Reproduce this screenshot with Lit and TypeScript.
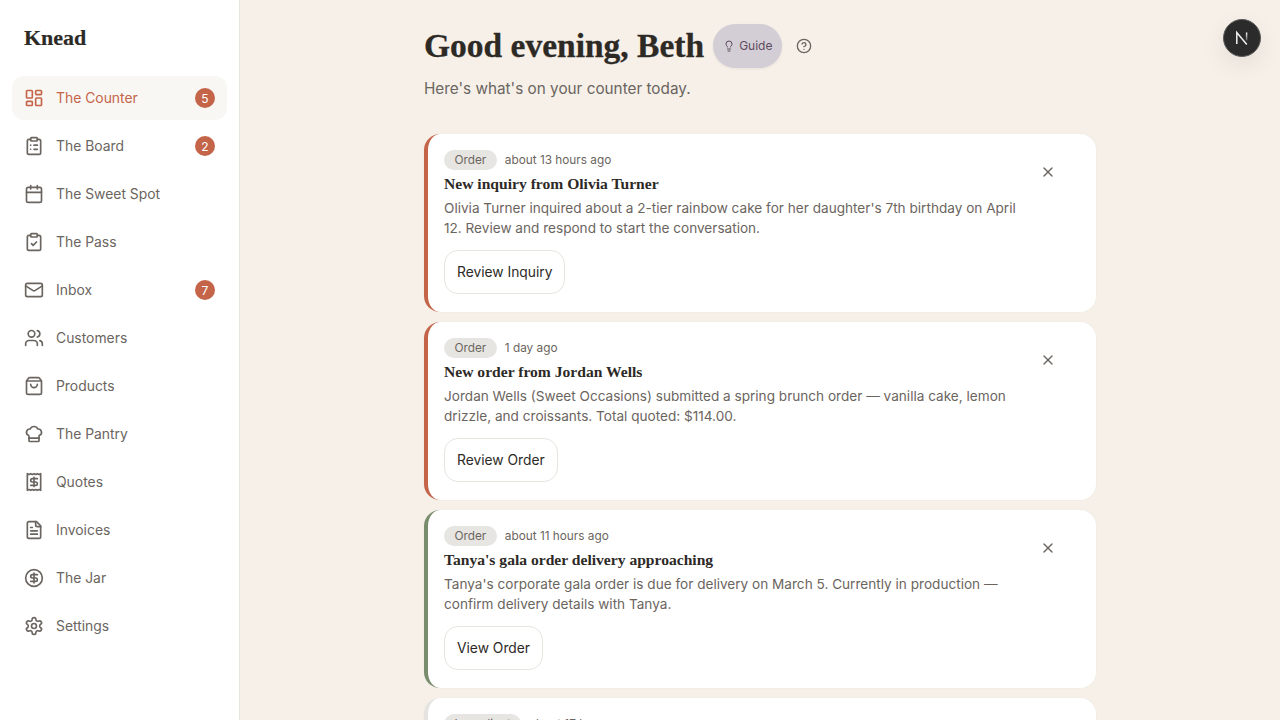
import { LitElement, html, css, svg } from 'lit';
import { customElement, state } from 'lit/decorators.js';
import { classMap } from 'lit/directives/class-map.js';

const ICONS: Record<string, unknown> = {
  dashboard: svg`<rect x="3" y="3" width="7" height="9" rx="1"/><rect x="14" y="3" width="7" height="5" rx="1"/><rect x="14" y="12" width="7" height="9" rx="1"/><rect x="3" y="16" width="7" height="5" rx="1"/>`,
  board: svg`<rect x="8" y="2" width="8" height="4" rx="1"/><path d="M16 4h2a2 2 0 0 1 2 2v14a2 2 0 0 1-2 2H6a2 2 0 0 1-2-2V6a2 2 0 0 1 2-2h2"/><path d="M12 11h4"/><path d="M12 16h4"/><path d="M8 11h.01"/><path d="M8 16h.01"/>`,
  calendar: svg`<path d="M8 2v4"/><path d="M16 2v4"/><rect x="3" y="4" width="18" height="18" rx="2"/><path d="M3 10h18"/>`,
  pass: svg`<rect x="8" y="2" width="8" height="4" rx="1"/><path d="M16 4h2a2 2 0 0 1 2 2v14a2 2 0 0 1-2 2H6a2 2 0 0 1-2-2V6a2 2 0 0 1 2-2h2"/><path d="m9 14 2 2 4-4"/>`,
  mail: svg`<rect x="2" y="4" width="20" height="16" rx="2"/><path d="m22 7-8.97 5.7a1.94 1.94 0 0 1-2.06 0L2 7"/>`,
  users: svg`<path d="M16 21v-2a4 4 0 0 0-4-4H6a4 4 0 0 0-4 4v2"/><circle cx="9" cy="7" r="4"/><path d="M22 21v-2a4 4 0 0 0-3-3.87"/><path d="M16 3.13a4 4 0 0 1 0 7.75"/>`,
  bag: svg`<path d="M16 10a4 4 0 0 1-8 0"/><path d="M3.103 6.034h17.794"/><path d="M3.4 5.467a2 2 0 0 0-.4 1.2V20a2 2 0 0 0 2 2h14a2 2 0 0 0 2-2V6.667a2 2 0 0 0-.4-1.2l-2-2.667A2 2 0 0 0 17 2H7a2 2 0 0 0-1.6.8z"/>`,
  chef: svg`<path d="M17 21a1 1 0 0 0 1-1v-5.35c0-.457.316-.844.727-1.041a4 4 0 0 0-2.134-7.589 5 5 0 0 0-9.186 0 4 4 0 0 0-2.134 7.588c.411.198.727.585.727 1.041V20a1 1 0 0 0 1 1Z"/><path d="M6 17h12"/>`,
  receipt: svg`<path d="M4 2v20l2-1 2 1 2-1 2 1 2-1 2 1 2-1 2 1V2l-2 1-2-1-2 1-2-1-2 1-2-1-2 1Z"/><path d="M16 8h-6a2 2 0 1 0 0 4h4a2 2 0 1 1 0 4H8"/><path d="M12 17.5v-11"/>`,
  file: svg`<path d="M15 2H6a2 2 0 0 0-2 2v16a2 2 0 0 0 2 2h12a2 2 0 0 0 2-2V7Z"/><path d="M14 2v4a2 2 0 0 0 2 2h4"/><path d="M10 9H8"/><path d="M16 13H8"/><path d="M16 17H8"/>`,
  dollar: svg`<circle cx="12" cy="12" r="10"/><path d="M16 8h-6a2 2 0 1 0 0 4h4a2 2 0 1 1 0 4H8"/><path d="M12 18V6"/>`,
  settings: svg`<path d="M12.22 2h-.44a2 2 0 0 0-2 2v.18a2 2 0 0 1-1 1.73l-.43.25a2 2 0 0 1-2 0l-.15-.08a2 2 0 0 0-2.73.73l-.22.38a2 2 0 0 0 .73 2.73l.15.1a2 2 0 0 1 1 1.72v.51a2 2 0 0 1-1 1.74l-.15.09a2 2 0 0 0-.73 2.73l.22.38a2 2 0 0 0 2.73.73l.15-.08a2 2 0 0 1 2 0l.43.25a2 2 0 0 1 1 1.73V20a2 2 0 0 0 2 2h.44a2 2 0 0 0 2-2v-.18a2 2 0 0 1 1-1.73l.43-.25a2 2 0 0 1 2 0l.15.08a2 2 0 0 0 2.73-.73l.22-.39a2 2 0 0 0-.73-2.73l-.15-.08a2 2 0 0 1-1-1.74v-.5a2 2 0 0 1 1-1.74l.15-.09a2 2 0 0 0 .73-2.73l-.22-.38a2 2 0 0 0-2.73-.73l-.15.08a2 2 0 0 1-2 0l-.43-.25a2 2 0 0 1-1-1.73V4a2 2 0 0 0-2-2z"/><circle cx="12" cy="12" r="3"/>`,
  bulb: svg`<path d="M15 14c.2-1 .7-1.7 1.5-2.5 1-.9 1.5-2.2 1.5-3.5A6 6 0 0 0 6 8c0 1 .2 2.2 1.5 3.5.7.7 1.3 1.5 1.5 2.5"/><path d="M9 18h6"/><path d="M10 22h4"/>`,
  help: svg`<circle cx="12" cy="12" r="10"/><path d="M9.09 9a3 3 0 0 1 5.83 1c0 2-3 3-3 3"/><path d="M12 17h.01"/>`,
  close: svg`<path d="M18 6 6 18"/><path d="m6 6 12 12"/>`,
};

const icon = (name: string, size: number) => html`
  <svg width=${size} height=${size} viewBox="0 0 24 24" fill="none" stroke="currentColor" stroke-width="2" stroke-linecap="round" stroke-linejoin="round">${ICONS[name]}</svg>
`;

const NAV = [
  { label: 'The Counter', icon: 'dashboard', badge: 5 },
  { label: 'The Board', icon: 'board', badge: 2 },
  { label: 'The Sweet Spot', icon: 'calendar' },
  { label: 'The Pass', icon: 'pass' },
  { label: 'Inbox', icon: 'mail', badge: 7 },
  { label: 'Customers', icon: 'users' },
  { label: 'Products', icon: 'bag' },
  { label: 'The Pantry', icon: 'chef' },
  { label: 'Quotes', icon: 'receipt' },
  { label: 'Invoices', icon: 'file' },
  { label: 'The Jar', icon: 'dollar' },
  { label: 'Settings', icon: 'settings' },
];

const CARDS = [
  {
    tag: 'Order', time: 'about 13 hours ago', tone: 'urgent', action: 'Review Inquiry',
    title: 'New inquiry from Olivia Turner',
    body: "Olivia Turner inquired about a 2-tier rainbow cake for her daughter's 7th birthday on April 12. Review and respond to start the conversation.",
  },
  {
    tag: 'Order', time: '1 day ago', tone: 'urgent', action: 'Review Order',
    title: 'New order from Jordan Wells',
    body: 'Jordan Wells (Sweet Occasions) submitted a spring brunch order — vanilla cake, lemon drizzle, and croissants. Total quoted: $114.00.',
  },
  {
    tag: 'Order', time: 'about 11 hours ago', tone: 'calm', action: 'View Order',
    title: "Tanya's gala order delivery approaching",
    body: "Tanya's corporate gala order is due for delivery on March 5. Currently in production — confirm delivery details with Tanya.",
  },
  {
    tag: 'Ingredient', time: 'about 17 hours ago', tone: 'muted', action: 'View Pantry',
    title: 'Running low on vanilla bean paste',
    body: 'Vanilla bean paste is below its reorder level. Add it to your next supply run.',
  },
];

@customElement('app-root')
export class AppRoot extends LitElement {
  @state() private active = 'The Counter';

  static styles = css`
    :host {
      display: flex;
      width: 100%;
      height: 720px;
      overflow: hidden;
      background: #f6f0e9;
      font-family: 'Inter', sans-serif;
      color: #2d2a26;
    }

    .sidebar {
      flex: 0 0 240px;
      box-sizing: border-box;
      background: #fff;
      border-right: 1px solid #e8e4df;
      padding: 0 12px;
    }

    .logo {
      height: 76px;
      display: flex;
      align-items: center;
      padding-left: 12px;
      font-family: 'Liberation Serif', serif;
      font-size: 22px;
      font-weight: 700;
      -webkit-text-stroke: 0.2px #2d2a26;
    }

    .nav {
      display: flex;
      flex-direction: column;
      gap: 4px;
    }

    .nav-item {
      display: flex;
      align-items: center;
      gap: 12px;
      height: 44px;
      width: 215px;
      box-sizing: border-box;
      padding: 0 12px;
      border-radius: 12px;
      color: #6b6560;
      font-size: 13.9px;
    }

    .nav-item.active {
      background: #f9f7f4;
      color: #c4654a;
    }

    .nav-item svg {
      flex: none;
    }

    .nav-label {
      flex: 1;
      padding-bottom: 1px;
    }

    .badge {
      width: 20px;
      height: 20px;
      border-radius: 50%;
      background: #c4654a;
      color: #fff;
      font-size: 12px;
      display: flex;
      align-items: center;
      justify-content: center;
    }

    .main {
      flex: 1;
      min-width: 0;
      position: relative;
      padding-top: 24px;
    }

    .column {
      width: 672px;
      margin: 0 auto;
    }

    .heading {
      display: flex;
      align-items: center;
      height: 44px;
    }

    h1 {
      margin: 0;
      font-family: 'Liberation Serif', serif;
      font-size: 33.5px;
      font-weight: 700;
      white-space: nowrap;
      -webkit-text-stroke: 0.3px #2d2a26;
    }

    .guide {
      display: flex;
      align-items: center;
      gap: 4px;
      height: 44px;
      margin-left: 9px;
      padding: 0 10px 1px;
      border: none;
      border-radius: 22px;
      background: #d3ced5;
      color: #5d4a5f;
      font-family: 'Inter', sans-serif;
      font-size: 12px;
      box-shadow: 0 1px 3px rgba(0, 0, 0, 0.06);
    }

    .help {
      display: flex;
      margin-left: 14px;
      color: #6b6560;
    }

    .sub {
      margin: 9px 0 0;
      font-size: 15.3px;
      line-height: 24px;
      color: #6b6560;
    }

    .cards {
      margin-top: 33px;
      display: flex;
      flex-direction: column;
      gap: 10px;
    }

    .card {
      display: flex;
      box-sizing: border-box;
      height: 178px;
      flex: none;
      padding: 16px 26px 16px 16px;
      background: #fff;
      border-radius: 16px;
      border-left: 4px solid #e5e3df;
      box-shadow: 0 0 0 1px rgba(232, 228, 223, 0.2);
    }

    .card.urgent {
      border-left-color: #c4654a;
    }

    .card.calm {
      border-left-color: #7a8c6e;
    }

    .card-body {
      flex: 1;
      min-width: 0;
    }

    .meta {
      display: flex;
      align-items: center;
      gap: 8px;
      height: 20px;
      font-size: 11.8px;
      color: #6b6560;
    }

    .time {
      padding-bottom: 1px;
    }

    .tag {
      padding: 0 10.5px;
      height: 20px;
      line-height: 20px;
      border-radius: 10px;
      background: #e7e5e2;
    }

    .title {
      margin-top: 4px;
      font-family: 'Liberation Serif', serif;
      font-size: 15.6px;
      font-weight: 700;
      line-height: 20px;
    }

    .text {
      margin: 4px 0 0;
      font-size: 13.6px;
      line-height: 20px;
      color: #6b6560;
    }

    .action {
      display: block;
      height: 44px;
      margin-top: 12px;
      padding: 0 12px;
      background: #fff;
      border: 1px solid #e8e4df;
      border-radius: 14px;
      color: #2d2a26;
      font: inherit;
      font-size: 13.8px;
    }

    .close {
      flex: none;
      width: 44px;
      height: 44px;
      display: flex;
      align-items: center;
      justify-content: center;
      color: #6b6560;
    }

    .next-badge {
      position: absolute;
      top: 19px;
      right: 19px;
      width: 38px;
      height: 38px;
      box-sizing: border-box;
      border-radius: 50%;
      background: #2b2b2b;
      border: 1.5px solid #5a5a5a;
      display: flex;
      align-items: center;
      justify-content: center;
      box-shadow: 0 8px 24px rgba(0, 0, 0, 0.08);
    }
  `;

  render() {
    return html`
      <aside class="sidebar">
        <div class="logo">Knead</div>
        <nav class="nav">
          ${NAV.map(
            (item) => html`
              <div class=${classMap({ 'nav-item': true, active: item.label === this.active })}>
                ${icon(item.icon, 20)}
                <span class="nav-label">${item.label}</span>
                ${item.badge ? html`<span class="badge">${item.badge}</span>` : ''}
              </div>
            `
          )}
        </nav>
      </aside>
      <main class="main">
        <div class="column">
          <div class="heading">
            <h1>Good evening, Beth</h1>
            <button class="guide">${icon('bulb', 12)}<span>Guide</span></button>
            <span class="help">${icon('help', 16)}</span>
          </div>
          <p class="sub">Here's what's on your counter today.</p>
          <div class="cards">
            ${CARDS.map(
              (card) => html`
                <article class="card ${card.tone}">
                  <div class="card-body">
                    <div class="meta"><span class="tag">${card.tag}</span><span class="time">${card.time}</span></div>
                    <div class="title">${card.title}</div>
                    <p class="text">${card.body}</p>
                    <button class="action">${card.action}</button>
                  </div>
                  <span class="close">${icon('close', 16)}</span>
                </article>
              `
            )}
          </div>
        </div>
        <div class="next-badge">
          <svg width="16" height="16" viewBox="0 0 16 16" fill="none" stroke-width="1.5">
            <defs>
              <linearGradient id="fade" gradientUnits="userSpaceOnUse" x1="0" y1="2" x2="0" y2="11">
                <stop offset="0" stop-color="#fff" />
                <stop offset="1" stop-color="#fff" stop-opacity="0.2" />
              </linearGradient>
            </defs>
            <path d="M2.8 14V2.6l10 12" stroke="#f2f2f2" />
            <path d="M12.6 2.5v8" stroke="url(#fade)" />
          </svg>
        </div>
      </main>
    `;
  }
}
